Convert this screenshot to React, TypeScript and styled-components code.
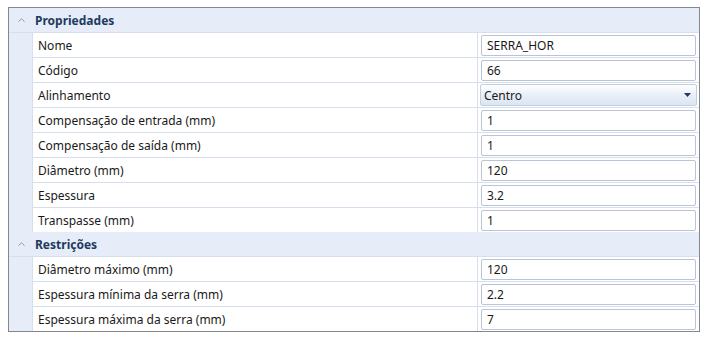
import React from "react";
import styled, { createGlobalStyle } from "styled-components";

const GlobalStyle = createGlobalStyle`
  html, body { margin: 0; padding: 0; background: #ffffff; }
  body { font-family: "Noto Sans", "Open Sans", sans-serif; font-size: 12px; }
`;

const Page = styled.div`
  padding: 7px 0 0 8px;
`;

const Grid = styled.div`
  width: 690px;
  border: 1px solid #828790;
  background: #ffffff;
`;

const SectionHeader = styled.div`
  display: flex;
  align-items: center;
  height: 24px;
  background: #e6edf8;
  border-bottom: 1px solid #d5dfee;
`;

const Caret = styled.span`
  display: flex;
  align-items: center;
  justify-content: center;
  width: 24px;
  height: 24px;
`;

const HeaderTitle = styled.span`
  font-weight: 700;
  color: #1e3a5f;
  padding-left: 2px;
`;

const SectionBody = styled.div`
  display: flex;
`;

const Gutter = styled.div`
  width: 23px;
  background: #e6edf8;
  border-right: 1px solid #d5dfee;
`;

const Rows = styled.div`
  flex: 1;
  display: flex;
  flex-direction: column;
`;

const Row = styled.div`
  display: grid;
  grid-template-columns: 444px 1px 221px;
  height: 24px;
  border-bottom: 1px solid #d5dfee;
  &:last-child {
    border-bottom: none;
  }
`;

const Label = styled.div`
  display: flex;
  align-items: center;
  padding-left: 5px;
  color: #1a1a1a;
  white-space: nowrap;
`;

const Divider = styled.div`
  background: #d5dfee;
`;

const ValueCell = styled.div`
  padding: 2px 3px 1px 3px;
`;

const Input = styled.div`
  box-sizing: border-box;
  height: 21px;
  border: 1px solid #b9c5d6;
  border-radius: 2px;
  background: #ffffff;
  display: flex;
  align-items: center;
  padding-left: 5px;
  color: #1a1a1a;
`;

const Select = styled.div`
  box-sizing: border-box;
  height: 22px;
  margin: -1px -1px 0 -1px;
  border: 1px solid #c4cfdd;
  border-radius: 2px;
  background: linear-gradient(#ffffff, #e9eff8 50%, #dbe5f3);
  display: flex;
  align-items: center;
  justify-content: space-between;
  padding: 0 5px 0 3px;
  color: #1a1a1a;
`;

type Prop = { label: string; value: string; select?: boolean };

const sections: { title: string; rows: Prop[] }[] = [
  {
    title: "Propriedades",
    rows: [
      { label: "Nome", value: "SERRA_HOR" },
      { label: "Código", value: "66" },
      { label: "Alinhamento", value: "Centro", select: true },
      { label: "Compensação de entrada (mm)", value: "1" },
      { label: "Compensação de saída (mm)", value: "1" },
      { label: "Diâmetro (mm)", value: "120" },
      { label: "Espessura", value: "3.2" },
      { label: "Transpasse (mm)", value: "1" },
    ],
  },
  {
    title: "Restrições",
    rows: [
      { label: "Diâmetro máximo (mm)", value: "120" },
      { label: "Espessura mínima da serra (mm)", value: "2.2" },
      { label: "Espessura máxima da serra (mm)", value: "7" },
    ],
  },
];

export default function App() {
  return (
    <Page>
      <GlobalStyle />
      <Grid>
        {sections.map((s) => (
          <div key={s.title}>
            <SectionHeader>
              <Caret>
                <svg width="7" height="4" viewBox="0 0 7 4">
                  <path d="M0.5 3.5 L3.5 0.8 L6.5 3.5" fill="none" stroke="#8a97aa" strokeWidth="1" />
                </svg>
              </Caret>
              <HeaderTitle>{s.title}</HeaderTitle>
            </SectionHeader>
            <SectionBody>
              <Gutter />
              <Rows>
                {s.rows.map((r) => (
                  <Row key={r.label}>
                    <Label>{r.label}</Label>
                    <Divider />
                    <ValueCell>
                      {r.select ? (
                        <Select>
                          <span>{r.value}</span>
                          <svg width="7" height="4" viewBox="0 0 7 4">
                            <path d="M0 0 H7 L3.5 4 Z" fill="#1e3a5f" />
                          </svg>
                        </Select>
                      ) : (
                        <Input>{r.value}</Input>
                      )}
                    </ValueCell>
                  </Row>
                ))}
              </Rows>
            </SectionBody>
          </div>
        ))}
      </Grid>
    </Page>
  );
}
